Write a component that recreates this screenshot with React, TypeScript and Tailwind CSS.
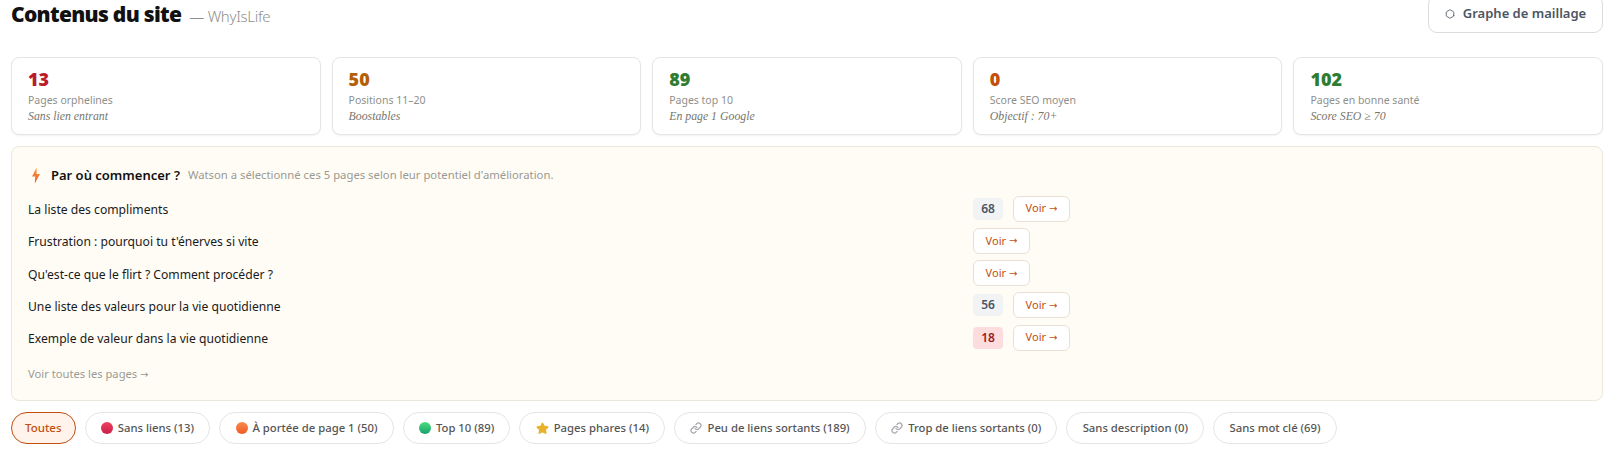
import { Link, Hexagon, Star } from 'lucide-react';

const stats = [
  { value: '13', label: 'Pages orphelines', note: 'Sans lien entrant', color: 'text-[#b91c2c]' },
  { value: '50', label: 'Positions 11–20', note: 'Boostables', color: 'text-[#b45f06]' },
  { value: '89', label: 'Pages top 10', note: 'En page 1 Google', color: 'text-[#2e7d32]' },
  { value: '0', label: 'Score SEO moyen', note: 'Objectif : 70+', color: 'text-[#c2500c]' },
  { value: '102', label: 'Pages en bonne santé', note: 'Score SEO ≥ 70', color: 'text-[#2e7d32]' },
];

const picks = [
  { title: 'La liste des compliments', score: '68', tone: 'bg-[#f1f3f5] text-[#4b5563]' },
  { title: "Frustration : pourquoi tu t'énerves si vite" },
  { title: "Qu'est-ce que le flirt ? Comment procéder ?" },
  { title: 'Une liste des valeurs pour la vie quotidienne', score: '56', tone: 'bg-[#f1f3f5] text-[#4b5563]' },
  { title: 'Exemple de valeur dans la vie quotidienne', score: '18', tone: 'bg-[#fcdcdc] text-[#991b1b]' },
];

function Dot({ className }: { className: string }) {
  return <span className={`h-[12px] w-[12px] rounded-full bg-linear-to-b ${className}`} />;
}

function Bolt() {
  return (
    <svg width="10" height="17" viewBox="0 0 10 17" className="ml-[3px]">
      <defs>
        <linearGradient id="bolt" x1="0" y1="0" x2="0" y2="1">
          <stop offset="0" stopColor="#f9a03f" />
          <stop offset="1" stopColor="#ef5a28" />
        </linearGradient>
      </defs>
      <path d="M5.6 0.5 L1 9.6 H4.2 L3.8 16.5 L9 7 H5.6 Z" fill="url(#bolt)" />
    </svg>
  );
}

const chips = [
  { label: 'Sans liens (13)', icon: <Dot className="from-[#f0405f] to-[#c81e4a]" /> },
  { label: 'À portée de page 1 (50)', icon: <Dot className="from-[#f98a4a] to-[#ee5a24]" /> },
  { label: 'Top 10 (89)', icon: <Dot className="from-[#4ade80] to-[#16a06a]" /> },
  { label: 'Pages phares (14)', icon: <Star className="h-[13px] w-[13px] fill-[#e8b32a] text-[#e8b32a]" /> },
  { label: 'Peu de liens sortants (189)', icon: <Link className="h-3 w-3 text-[#a8a8b2]" strokeWidth={2.5} /> },
  { label: 'Trop de liens sortants (0)', icon: <Link className="h-3 w-3 text-[#a8a8b2]" strokeWidth={2.5} /> },
  { label: 'Sans description (0)' },
  { label: 'Sans mot clé (69)' },
];

export default function App() {
  return (
    <div className="h-[453px] overflow-hidden bg-white pl-[11px] pr-[16px] font-['Noto_Sans',sans-serif]">
      {/* Header */}
      <div className="flex h-[33px] items-start justify-between">
        <div className="flex items-baseline gap-[8px]">
          <h1 className="text-[21px] leading-[28px] font-black tracking-[-0.7px] text-[#111111]">Contenus du site</h1>
          <span className="text-[15px] font-light tracking-[-0.3px] text-[#8f8f8a]">— WhyIsLife</span>
        </div>
        <button className="-mt-[5px] flex h-[38px] w-[175px] items-center justify-center gap-[8px] rounded-[9px] border border-[#dcdcdc] bg-white text-[13px] font-semibold text-[#4b5563]">
          <Hexagon className="h-[10px] w-[10px]" strokeWidth={2} />
          Graphe de maillage
        </button>
      </div>

      {/* Stats */}
      <div className="mt-[24px] grid grid-cols-5 gap-[11px]">
        {stats.map((s) => (
          <div key={s.label} className="h-[78px] rounded-[8px] border border-[#e5e5e5] bg-white px-[16px] pt-[11px] shadow-[0_1px_2px_rgba(0,0,0,0.05)]">
            <div className={`text-[18px] leading-[20px] font-black ${s.color}`}>{s.value}</div>
            <div className="mt-[3px] text-[10.5px] leading-[16px] text-[#8f8f8a]">{s.label}</div>
            <div className="font-['Liberation_Serif',serif] text-[11.8px] leading-[16px] text-[#77776f] italic">{s.note}</div>
          </div>
        ))}
      </div>

      {/* Par ou commencer */}
      <div className="mt-[11px] h-[255px] rounded-[8px] border border-[#ece7dc] bg-[#fffcf6] px-[16px] pt-[19px]">
        <div className="flex items-center">
          <Bolt />
          <span className="ml-[10px] text-[13px] font-semibold text-[#111111]">Par où commencer ?</span>
          <span className="ml-[8px] text-[11.3px] text-[#9a9a92]">Watson a sélectionné ces 5 pages selon leur potentiel d'amélioration.</span>
        </div>
        <div className="mt-[7px]">
          {picks.map((p) => (
            <div key={p.title} className="flex h-[32.25px] items-center">
              <span className="w-[945px] pt-[3px] text-[12.15px] text-[#1a1a1a]">{p.title}</span>
              {p.score && (
                <span className={`mr-[10px] flex h-[22px] w-[30px] items-center justify-center rounded-[4px] text-[12px] font-semibold ${p.tone}`}>{p.score}</span>
              )}
              <button className="flex h-[26px] w-[57px] items-center justify-center gap-[3px] rounded-[6px] border border-[#eadfd5] bg-white text-[11px] text-[#c2500c]">
                Voir <span className="font-['DejaVu_Sans',sans-serif] text-[10px]">→</span>
              </button>
            </div>
          ))}
        </div>
        <div className="mt-[12px] text-[11.2px] text-[#9a9a92]">
          Voir toutes les pages <span className="font-['DejaVu_Sans',sans-serif] text-[10px]">→</span>
        </div>
      </div>

      {/* Filters */}
      <div className="mt-[11px] flex gap-[9px]">
        <button className="flex h-[32px] items-center rounded-full border border-[#c2500c] bg-[#fff3ec] px-[13px] text-[11.5px] font-medium text-[#c2500c]">Toutes</button>
        {chips.map((c) => (
          <button key={c.label} className="flex h-[32px] items-center gap-[5px] rounded-full border border-[#e5e5e5] bg-white px-[15.25px] text-[11.3px] font-medium text-[#555555]">
            {c.icon}
            {c.label}
          </button>
        ))}
      </div>
    </div>
  );
}
